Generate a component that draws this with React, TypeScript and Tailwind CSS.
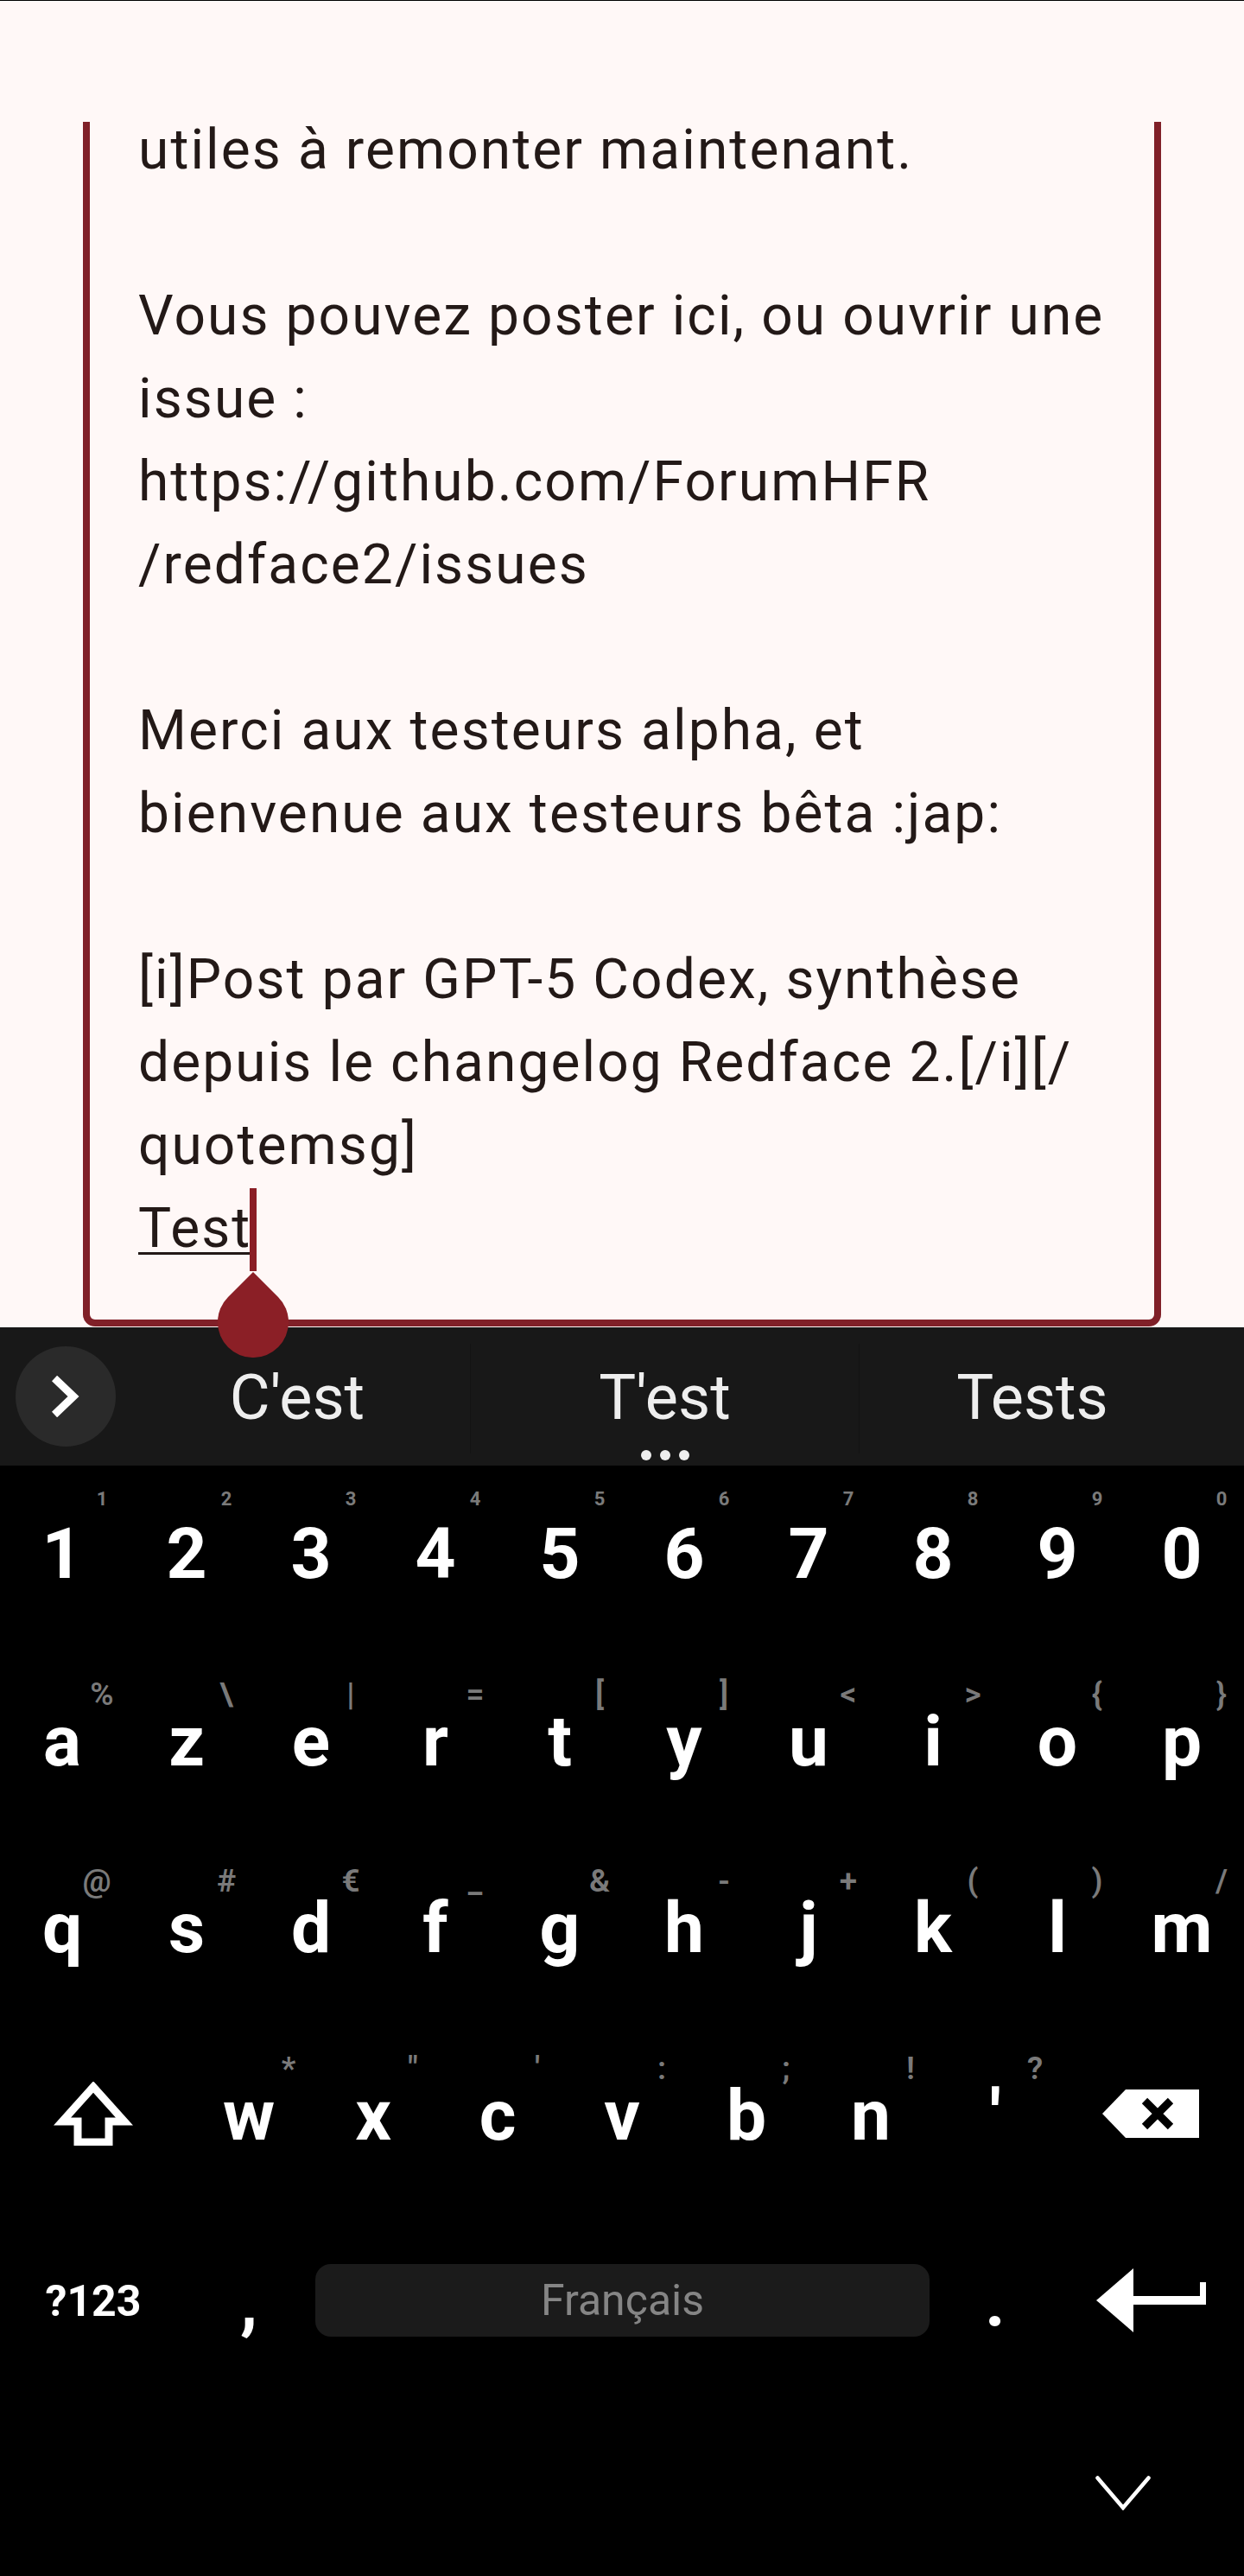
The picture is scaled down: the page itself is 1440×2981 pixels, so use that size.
const textLines = [
  'utiles à remonter maintenant.',
  '',
  'Vous pouvez poster ici, ou ouvrir une',
  'issue :',
  'https://github.com/ForumHFR',
  '/redface2/issues',
  '',
  'Merci aux testeurs alpha, et',
  'bienvenue aux testeurs bêta :jap:',
  '',
  '[i]Post par GPT-5 Codex, synthèse',
  'depuis le changelog Redface 2.[/i][/',
  'quotemsg]',
]

const digitRow = [
  ['1', '1'], ['2', '2'], ['3', '3'], ['4', '4'], ['5', '5'],
  ['6', '6'], ['7', '7'], ['8', '8'], ['9', '9'], ['0', '0'],
]
const topRow = [
  ['a', '%'], ['z', '\\'], ['e', '|'], ['r', '='], ['t', '['],
  ['y', ']'], ['u', '<'], ['i', '>'], ['o', '{'], ['p', '}'],
]
const middleRow = [
  ['q', '@'], ['s', '#'], ['d', '€'], ['f', '_'], ['g', '&'],
  ['h', '-'], ['j', '+'], ['k', '('], ['l', ')'], ['m', '/'],
]
const bottomRow = [
  ['w', '*'], ['x', '"'], ['c', "'"], ['v', ':'], ['b', ';'], ['n', '!'], ["'", '?'],
]

function Key({ label, hint, small }: { label: string; hint?: string; small?: boolean }) {
  return (
    <div className="relative w-[144px] shrink-0 pt-[61px] text-center text-[82px] leading-none font-bold text-white">
      {label}
      {hint && (
        <span
          className={
            small
              ? 'absolute left-[96px] top-[28px] w-[44px] text-center text-[22px] leading-none font-bold text-[#7a7a7a]'
              : hint === '@'
                ? 'absolute left-[90px] top-[29px] w-[44px] text-center text-[37px] leading-none font-semibold text-[#7a7a7a]'
                : 'absolute left-[96px] top-[29px] w-[44px] text-center text-[37px] leading-none font-semibold text-[#7a7a7a]'
          }
        >
          {hint}
        </span>
      )}
    </div>
  )
}

function KeyRow({ keys, small }: { keys: string[][]; small?: boolean }) {
  return (
    <div className="flex h-[216.6px]">
      {keys.map(([label, hint]) => (
        <Key key={label} label={label} hint={hint} small={small} />
      ))}
    </div>
  )
}

export default function App() {
  return (
    <div className="relative flex h-[2981px] w-[1440px] flex-col overflow-hidden bg-black font-[Roboto,sans-serif]">
      <div className="h-px bg-black" />

      {/* editor */}
      <div className="h-[1535px] bg-[#fff8f7] pt-[140px]">
        <div className="relative mx-[96px] flow-root h-[1394px] rounded-b-[14px] border-x-8 border-b-8 border-[#802028] pl-[56px] text-[64px] leading-[96px] tracking-[2.1px] text-[#231917]">
          <div className="-mt-[15px]">
            {textLines.map((line, i) => (
              <div key={i} className="h-[96px] whitespace-pre">
                {line}
              </div>
            ))}
            <div className="h-[96px]">
              <span className="underline decoration-[3px] underline-offset-[6px]">Test</span>
            </div>
          </div>
          <div className="absolute left-[185px] top-[1234px] h-[96px] w-[8px] bg-[#8b1f26]" />
        </div>
      </div>

      {/* suggestions strip */}
      <div className="flex h-[160px] items-center bg-[#181818] pt-[4px] text-[72px] text-[#eeeeee]">
        <div className="-mt-[4px] ml-[18px] mr-[10px] flex h-[116px] w-[116px] items-center justify-center rounded-full bg-[#2a2a2a]">
          <svg width="32" height="48" viewBox="0 0 32 48" fill="none" stroke="#ffffff" strokeWidth="9">
            <path d="M3 3l22 21L3 45" />
          </svg>
        </div>
        <div className="flex h-full w-[400px] items-center justify-center">C'est</div>
        <div className="h-[127px] w-px bg-[#131313]" />
        <div className="relative flex h-full w-[449px] items-center justify-center">
          T'est
          <div className="absolute bottom-[6px] flex gap-[10px]">
            <span className="h-[12px] w-[12px] rounded-full bg-[#eeeeee]" />
            <span className="h-[12px] w-[12px] rounded-full bg-[#eeeeee]" />
            <span className="h-[12px] w-[12px] rounded-full bg-[#eeeeee]" />
          </div>
        </div>
        <div className="h-[127px] w-px bg-[#131313]" />
        <div className="flex h-full w-[400px] items-center justify-center">Tests</div>
      </div>

      {/* keyboard */}
      <div className="bg-black">
        <KeyRow keys={digitRow} small />
        <KeyRow keys={topRow} />
        <KeyRow keys={middleRow} />

        <div className="flex h-[216.6px]">
          <div className="flex w-[216px] shrink-0 justify-center pt-[63px]">
            <svg width="92" height="74" viewBox="0 0 92 74" fill="none" stroke="#ffffff" strokeWidth="9">
              <path d="M46 6L10 46h18v24h36V46h18z" />
            </svg>
          </div>
          {bottomRow.map(([label, hint]) => (
            <Key key={label} label={label} hint={hint} />
          ))}
          <div className="flex w-[216px] shrink-0 justify-center pt-[72px]">
            <svg width="112" height="56" viewBox="0 0 112 56">
              <path d="M0 28L27 0h85v56H27z" fill="#ffffff" />
              <path d="M49 13l30 30M79 13L49 43" stroke="#000000" strokeWidth="9" />
            </svg>
          </div>
        </div>

        <div className="flex h-[216.6px]">
          <div className="w-[216px] shrink-0 pt-[76px] text-center text-[50px] leading-none font-bold text-white">
            ?123
          </div>
          <Key label="," />
          <div className="w-[720px] shrink-0 pl-[5px] pr-[4px] pt-[58px]">
            <div className="flex h-[84px] items-center justify-center rounded-[18px] bg-[#1b1b1b] text-[50px] text-[#858585]">
              Français
            </div>
          </div>
          <Key label="." />
          <div className="flex w-[216px] shrink-0 justify-center pt-[63px]">
            <svg width="127" height="74" viewBox="0 0 127 74" fill="#ffffff">
              <path d="M0 37L43 0v74z" />
              <path d="M43 32h77V16h7v26H43z" />
            </svg>
          </div>
        </div>
      </div>

      {/* nav bar */}
      <div className="flex flex-1 justify-end bg-black pr-[108px] pt-[86px]">
        <svg width="64" height="40" viewBox="0 0 64 40" fill="none" stroke="#ffffff" strokeWidth="4.5" strokeLinecap="round">
          <path d="M2.5 2.5L32 37 61.5 2.5" />
        </svg>
      </div>

      {/* selection handle */}
      <svg className="absolute left-[252px] top-[1472px]" width="82" height="99" viewBox="0 0 82 99" fill="#8b1f26">
        <path d="M41 0L70 29A41 41 0 1 1 12 29z" />
      </svg>
    </div>
  )
}
